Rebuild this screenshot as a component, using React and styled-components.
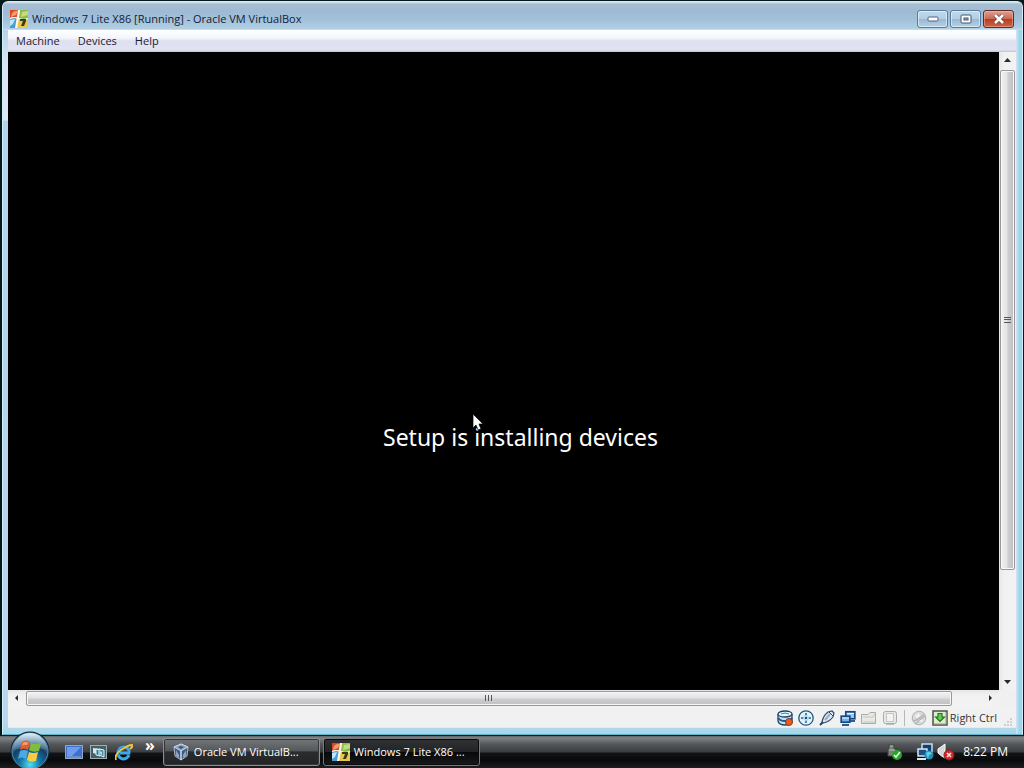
import React from 'react';
import styled, { createGlobalStyle, css } from 'styled-components';

const GlobalStyle = createGlobalStyle`
  * { box-sizing: border-box; }
  body { margin: 0; background: #04191a; font-family: "Open Sans", "Noto Sans", sans-serif; }
  button { font: inherit; margin: 0; padding: 0; border: 0; background: none; color: inherit; }
  svg { display: block; flex: none; }
`;

const Desktop = styled.div`
  height: 100vh;
  display: flex;
  flex-direction: column;
  overflow: hidden;
`;

const Window = styled.main`
  flex: 1;
  min-height: 0;
  margin: 1px 1px 0 2px;
  padding: 0 6px 6px 5px;
  display: flex;
  flex-direction: column;
  border: 1px solid #d4ecf8;
  border-bottom-color: #5fb4ca;
  border-radius: 6px 6px 0 0;
  background:
    linear-gradient(90deg, #d6e2f6, #a4d6ea 50%, #8fd7e9) right 28px / 6px 100% no-repeat,
    linear-gradient(#b7d2e6 0 28px, #d7e4f4 60px, #dce9f7 118px, #b0d4ee 119px, #b7d8f0 720px, #a5d7e8);
`;

const TitleBar = styled.header`
  flex: none;
  height: 28px;
  margin: 0 -6px 0 -5px;
  padding: 5px 8px 0 7px;
  display: flex;
  align-items: center;
  gap: 4px;
  border-radius: 5px 5px 0 0;
  background: linear-gradient(#dceaf4 0, #a6bed2 2px, #9fbad2 9px, #a2c2da 18px, #b1d0e5 27px, #dbe9f5);
`;

const Title = styled.h1`
  flex: 1;
  margin: 0;
  font-size: 11px;
  line-height: 16px;
  font-weight: 400;
  color: #142039;
  white-space: nowrap;
`;

const Controls = styled.div`
  display: flex;
  gap: 2px;
`;

const ControlButton = styled.button`
  width: 31px;
  height: 18px;
  display: grid;
  place-items: center;
  border: 1px solid #597b9e;
  border-radius: 3px;
  box-shadow: inset 0 0 0 1px rgba(255, 255, 255, 0.5);
  background: linear-gradient(#c2d8e9, #b4cee3 48%, #98b8d3 50%, #b3d2e8);
  ${({ $danger }) => $danger && css`
    border-color: #622824;
    box-shadow: inset 0 0 0 1px rgba(255, 200, 180, 0.45);
    background: linear-gradient(#dda092, #cb6a55 48%, #b73b22 50%, #cd6447);
  `}
`;

const MenuBar = styled.nav`
  flex: none;
  height: 22px;
  padding: 0 8px;
  display: flex;
  gap: 18px;
  background: linear-gradient(#ffffff, #f4f6fc 36%, #dfe0f0 50%, #e2e3f2 90%, #c1c2cf);
`;

const MenuItem = styled.button`
  font-size: 11px;
  line-height: 20px;
  color: #1c1b33;
`;

const Viewport = styled.div`
  flex: 1;
  min-height: 0;
  display: grid;
  grid-template: minmax(0, 1fr) 17px / minmax(0, 1fr) 17px;
  background: #f0f0f1;
`;

const GuestScreen = styled.section`
  display: grid;
  place-items: center;
  padding: 132px 0 0 34px;
  background: #000;
`;

const SetupMessage = styled.p`
  position: relative;
  margin: 0;
  font-family: "Noto Sans", sans-serif;
  font-size: 23px;
  line-height: 32px;
  color: #fff;
  white-space: nowrap;
`;

const Cursor = styled.svg`
  position: absolute;
  left: 89px;
  top: -8px;
`;

const ScrollBar = styled.div`
  display: flex;
  flex-direction: ${({ $vertical }) => ($vertical ? 'column' : 'row')};
  background: ${({ $vertical }) => ($vertical
    ? 'linear-gradient(90deg, #e6e6e8, #f1f1f2 30%, #f2f2f2)'
    : 'linear-gradient(#e6e6e8, #f1f1f2 30%, #f2f2f2)')};
`;

const ScrollArrow = styled.button`
  flex: none;
  width: 17px;
  height: 17px;
  display: grid;
  place-items: center;
`;

const Track = styled.div`
  flex: 1;
  min-height: 0;
  min-width: 0;
  display: flex;
  padding: 1px;
  flex-direction: ${({ $vertical }) => ($vertical ? 'column' : 'row')};
`;

const Thumb = styled.div`
  display: grid;
  place-items: center;
  border: 1px solid #98989c;
  border-radius: 2px;
  box-shadow: inset 0 0 0 1px #f7f7f7;
  flex: 0 0 ${({ $size }) => $size};
  background: linear-gradient(${({ $vertical }) => ($vertical ? '90deg' : '180deg')}, #f2f2f2, #e1e1e2 48%, #cfcfd1 52%, #c0c0c4);
`;

const StatusBar = styled.footer`
  flex: none;
  height: 21px;
  padding: 2px 4px 0 8px;
  display: flex;
  align-items: center;
  justify-content: flex-end;
  gap: 5px;
  background: #f1f1f1;
  border-bottom: 1px solid #e6e9fa;
`;

const StatusDivider = styled.span`
  width: 1px;
  height: 16px;
  margin: 0 1px;
  background: #b8b8b8;
`;

const HostKey = styled.span`
  margin-left: -3px;
  font-size: 11px;
  line-height: 16px;
  color: #37373b;
`;

const ResizeGrip = styled.svg`
  align-self: flex-end;
`;

const Taskbar = styled.nav`
  position: relative;
  flex: none;
  height: 33px;
  padding: 2px 16px 2px 10px;
  display: flex;
  align-items: center;
  border-top: 1px solid #071d25;
  background: linear-gradient(#5c6266 0, #808487 2px, #55585b 8px, #3b3d40 16px, #121416 17px, #08090a 24px, #1c1e20);
  color: #fff;
`;

const StartButton = styled.button`
  flex: none;
  width: 40px;
  height: 28px;
  position: relative;
`;

const Orb = styled.svg`
  position: absolute;
  left: 0;
  bottom: -5px;
`;

const QuickLaunch = styled.div`
  display: flex;
  align-items: center;
  gap: 7px;
  margin: 0 8px 0 15px;
`;

const Chevron = styled.button`
  align-self: flex-start;
  margin: -6px 0 0 5px;
  font-size: 16px;
  line-height: 16px;
  font-weight: 700;
`;

const QuickButton = styled.button`
  width: 18px;
  height: 18px;
`;

const Tasks = styled.div`
  flex: 1;
  display: flex;
  gap: 3px;
`;

const TaskButton = styled.button`
  width: 157px;
  height: 28px;
  padding: 0 8px;
  display: flex;
  align-items: center;
  gap: 4px;
  border: 1px solid #8b8d8f;
  border-radius: 3px;
  box-shadow: inset 0 0 0 1px #33363a;
  text-align: left;
  background: linear-gradient(#75787b, #55585b 45%, #2a2c2e 50%, #222426);
  ${({ $active }) => $active && css`
    border-color: #77797b;
    box-shadow: inset 0 0 0 1px #0a0b0c;
    background: linear-gradient(#303234, #222426 48%, #08090a 52%, #18191b);
  `}
`;

const TaskLabel = styled.span`
  flex: 1;
  min-width: 0;
  white-space: nowrap;
  font-size: 11px;
  line-height: 16px;
`;

const Tray = styled.div`
  display: flex;
  align-items: center;
  gap: 3px;
`;

const TrayGap = styled.span`
  width: 7px;
`;

const Clock = styled.time`
  margin-left: 5px;
  font-size: 12px;
  line-height: 16px;
  white-space: nowrap;
`;

const SevenIcon = () => (
  <svg width="18" height="18" viewBox="0 0 18 18" aria-hidden="true">
    <rect width="18" height="18" fill="#f1eee0" />
    <path d="M0 0H9L8 8Q4 6 0 8Z" fill="#d64a22" />
    <path d="M2 3Q5 0 8 1L6 5 1 7Z" fill="#f29a6a" />
    <path d="M10 0H18V8Q13 10 9 8Z" fill="#8fbd4d" />
    <path d="M12 2 18 1V5L11 7Z" fill="#c5dc7e" />
    <path d="M0 9Q4 7 8 9L6 18H0Z" fill="#4d9bd4" />
    <path d="M0 10 5 9 3 14 0 16Z" fill="#c4e4f6" />
    <path d="M9 9Q14 11 18 9V18H7Z" fill="#e7c74d" />
    <path d="M8 0H10L7 18H5ZM0 8Q4 6 9 8T18 8V9Q13 11 9 9T0 9Z" fill="#fff8e6" />
    <path d="M10 9H16V11L14 16H11L13 11H10Z" fill="#3a3c12" />
  </svg>
);

const VirtualBoxIcon = () => (
  <svg width="18" height="18" viewBox="0 0 18 18" aria-hidden="true">
    <path d="M9 1 16 4 15 13 9 17 3 13 2 4Z" fill="#3f587c" stroke="#a9bad0" />
    <path d="M9 1 16 4 9 8 2 4Z" fill="#8ba3c1" stroke="#c6d3e3" />
    <path d="M9 8V17" stroke="#d0dbe8" strokeWidth="1.5" />
    <path d="M4 7 7 12V15L4 13ZM14 7 11 12V15L14 13Z" fill="#8ca5c5" />
    <path d="M6 4 9 3 12 4 9 6Z" fill="#385477" />
  </svg>
);

const WindowsOrb = () => (
  <Orb width="40" height="40" viewBox="0 0 40 40" aria-hidden="true">
    <defs>
      <radialGradient id="orb" cx="50%" cy="88%" r="82%">
        <stop offset="0" stopColor="#4de1fa" />
        <stop offset="0.34" stopColor="#1477a6" />
        <stop offset="0.65" stopColor="#153e66" />
        <stop offset="1" stopColor="#8caec1" />
      </radialGradient>
      <linearGradient id="gloss" x2="0" y2="1">
        <stop stopColor="#e3f2f8" stopOpacity="0.95" />
        <stop offset="1" stopColor="#6c9abb" stopOpacity="0.3" />
      </linearGradient>
    </defs>
    <circle cx="20" cy="20" r="19.5" fill="#0b2430" />
    <circle cx="20" cy="20" r="18" fill="url(#orb)" stroke="#5c90a8" />
    <path d="M3 19A17 17 0 0 1 37 19Q20 14 3 19Z" fill="url(#gloss)" />
    <path d="M12 11Q16 8 20 11L18 19Q14 16 10 19Z" fill="#e65f2b" />
    <path d="M21 12Q25 14 31 12L29 20Q23 22 19 19Z" fill="#80bd3f" />
    <path d="M10 20Q14 18 18 20L16 28Q12 25 8 28Z" fill="#4fa8e3" />
    <path d="M19 21Q23 23 28 21L26 30Q21 32 17 29Z" fill="#f9cb3f" />
    <path d="M13 12Q16 10 18 12L17 14Q14 13 12 15Z" fill="#f3a078" />
  </Orb>
);

const DesktopIcon = () => (
  <svg width="18" height="18" viewBox="0 0 18 18" aria-hidden="true">
    <rect x="0.5" y="2.5" width="17" height="13" fill="#3f70d0" stroke="#90a6c4" />
    <path d="M2 4H16L7 13H2Z" fill="#6c9bf0" />
    <path d="M2 13H16V15H2Z" fill="#6d8fc6" />
  </svg>
);

const SwitcherIcon = () => (
  <svg width="18" height="18" viewBox="0 0 18 18" aria-hidden="true">
    <rect x="0.5" y="2.5" width="16" height="13" fill="#4a5c64" stroke="#9dabb2" />
    <path d="M3 5 11 6V12L3 10Z" fill="#d7e5ea" />
    <path d="M6 6 10 7V13L6 12Z" fill="#2a7d92" stroke="#e0eef2" />
    <path d="M9 6 14 7V14L9 12Z" fill="#3990a6" stroke="#e8f4f6" />
    <path d="M10 8 12 9V12L10 11Z" fill="#a7e0e8" />
  </svg>
);

const ExplorerIcon = () => (
  <svg width="18" height="18" viewBox="0 0 18 18" aria-hidden="true">
    <path d="M14 12Q12 16 8 16 3 15 3 10 4 4 9 4 15 5 14 10H5" fill="none" stroke="#3ea9ea" strokeWidth="3" />
    <path d="M3 13Q2 5 10 4" fill="none" stroke="#1e78c9" strokeWidth="1" />
    <path d="M1 17Q-1 12 6 7T17 2Q18 4 15 6" fill="none" stroke="#efc43b" strokeWidth="2" />
  </svg>
);

const HardDiskIcon = () => (
  <svg width="16" height="16" viewBox="0 0 16 16" aria-hidden="true">
    <path d="M1 4V11Q2 15 8 15T15 11V4" fill="#c5e2f2" stroke="#1e4566" strokeWidth="1.3" />
    <ellipse cx="8" cy="4" rx="7" ry="3" fill="#eaf7ff" stroke="#1b456a" strokeWidth="1.3" />
    <path d="M1 8Q3 11 8 11T15 8" fill="none" stroke="#1f5b88" strokeWidth="2" />
    <path d="M4 4Q8 2 12 4" fill="none" stroke="#4181ac" />
    <circle cx="12" cy="12" r="3.5" fill="#ed5b1c" stroke="#7c3d26" />
  </svg>
);

const DiscIcon = () => (
  <svg width="16" height="16" viewBox="0 0 16 16" aria-hidden="true">
    <circle cx="8" cy="8" r="7.2" fill="#e2f2fa" stroke="#23577d" strokeWidth="1.3" />
    <path d="M8 3V5M8 11V13M3 8H5M11 8H13" stroke="#4789b5" strokeWidth="2" />
    <circle cx="8" cy="8" r="2.5" fill="#f6fbff" stroke="#a5c6db" />
    <circle cx="8" cy="8" r="1.3" fill="#194768" />
  </svg>
);

const UsbIcon = () => (
  <svg width="16" height="16" viewBox="0 0 16 16" aria-hidden="true">
    <path d="M3 12Q4 6 9 2L13 1 15 3 14 7Q10 12 4 13Z" fill="#dce8f4" stroke="#364c6a" strokeWidth="1.2" />
    <path d="M6 10 11 4" stroke="#93aed0" strokeWidth="2" />
    <path d="M10 2 14 6" stroke="#35506d" />
    <path d="M1 15 4 12" stroke="#214661" strokeWidth="2" />
  </svg>
);

const NetworkIcon = () => (
  <svg width="16" height="16" viewBox="0 0 16 16" aria-hidden="true">
    <rect x="5.8" y="1.8" width="9" height="7" fill="#9dc9f0" stroke="#164984" strokeWidth="1.7" />
    <path d="M10 11H15" stroke="#144478" strokeWidth="1.7" />
    <rect x="1.2" y="6.2" width="8.6" height="6" fill="#78b2e6" stroke="#164984" strokeWidth="1.7" />
    <path d="M2 15H9" stroke="#123f76" strokeWidth="1.7" />
    <path d="M7 3.5H14M2 8H9" stroke="#e6f6ff" />
  </svg>
);

const FolderIcon = () => (
  <svg width="16" height="16" viewBox="0 0 16 16" aria-hidden="true">
    <path d="M0.5 13.5V4.5H7L9 2.5H14.5V13.5Z" fill="#e9e9e4" stroke="#aaa" />
    <path d="M2 7H12L14 4M2 12H14" fill="none" stroke="#c5c5c5" />
  </svg>
);

const DisplayIcon = () => (
  <svg width="16" height="16" viewBox="0 0 16 16" aria-hidden="true">
    <rect x="1.5" y="1.5" width="13" height="12" rx="2" fill="#e8e8e5" stroke="#aaa" />
    <path d="M4 14.5H12" stroke="#bebebe" />
    <rect x="4.5" y="3.5" width="7" height="8" fill="#f4f4f2" stroke="#c6c6c4" />
  </svg>
);

const MouseIcon = () => (
  <svg width="16" height="16" viewBox="0 0 16 16" aria-hidden="true">
    <circle cx="8" cy="8" r="6.8" fill="#dadada" stroke="#b2b2b2" />
    <path d="M2 11Q8 10 13 4M4 14 14 6" fill="none" stroke="#b4b4b4" strokeWidth="1.3" />
    <path d="M4 6 8 3 9 6 6 8ZM8 11 12 9 11 12Z" fill="#f4f4f4" />
  </svg>
);

const HostKeyIcon = () => (
  <svg width="16" height="16" viewBox="0 0 16 16" aria-hidden="true">
    <rect x="1" y="1" width="14" height="14" fill="#e3ead2" stroke="#4a5342" strokeWidth="1.5" />
    <path d="M2 14H14V2" fill="none" stroke="#98a08c" />
    <path d="M6 3.5H10V7H12.5L8 11.5 3.5 7H6Z" fill="#5fd24b" stroke="#237421" strokeWidth="1.2" />
  </svg>
);

const SafeRemovalIcon = () => (
  <svg width="18" height="18" viewBox="0 0 18 18" aria-hidden="true">
    <path d="M4 2H9V6H11V13H3V6H4Z" fill="#7a817c" stroke="#414843" />
    <path d="M5 3H8M4 7H10" stroke="#b6bbb7" />
    <circle cx="12" cy="12" r="5" fill="#28a529" />
    <path d="M9 12 11 14 15 9" fill="none" stroke="#e8ffe4" strokeWidth="1.6" />
  </svg>
);

const TrayNetworkIcon = () => (
  <svg width="18" height="18" viewBox="0 0 18 18" aria-hidden="true">
    <rect x="6" y="1" width="10" height="8" fill="#113f78" stroke="#d5e9f4" strokeWidth="1.4" />
    <rect x="2" y="6" width="9" height="7" fill="#1b5286" stroke="#e2f3fb" strokeWidth="1.4" />
    <path d="M1 16H10" stroke="#dcebf1" strokeWidth="2" />
    <circle cx="13" cy="12" r="4.5" fill="#208dbc" />
    <path d="M10 10Q14 7 16 11L13 12 12 16Z" fill="#65d0d8" />
  </svg>
);

const SpeakerIcon = () => (
  <svg width="18" height="18" viewBox="0 0 18 18" aria-hidden="true">
    <path d="M1 6Q4 4 8 1V15Q4 13 1 10Z" fill="#d4d6da" stroke="#fafafa" />
    <circle cx="12" cy="12" r="5" fill="#cf2b2e" stroke="#921819" />
    <path d="M10 10 14 14M14 10 10 14" stroke="#ffe1df" strokeWidth="1.5" />
  </svg>
);

const Arrow = ({ path }) => (
  <svg width="7" height="7" viewBox="0 0 7 7" aria-hidden="true"><path d={path} fill="#292929" /></svg>
);

const arrows = {
  up: 'M0 5 3.5 1 7 5Z',
  down: 'M0 2 3.5 6 7 2Z',
  left: 'M5 0 2 3 5 6Z',
  right: 'M2 0 5 3 2 6Z',
};

const Grip = ({ vertical }) => (
  <svg width="8" height="8" viewBox="0 0 8 8" aria-hidden="true">
    <path d={vertical ? 'M0 1.5H7M0 3.5H7M0 6.5H7' : 'M0.5 0V6M3.5 0V6M6.5 0V6'} stroke="#57575b" />
  </svg>
);

const statusIcons = [HardDiskIcon, DiscIcon, UsbIcon, NetworkIcon, FolderIcon, DisplayIcon];

export default function App() {
  return (
    <Desktop>
      <GlobalStyle />
      <Window>
        <TitleBar>
          <SevenIcon />
          <Title>Windows 7 Lite X86 [Running] - Oracle VM VirtualBox</Title>
          <Controls>
            <ControlButton aria-label="Minimize">
              <svg width="12" height="6" viewBox="0 0 12 6"><rect x="1" y="1" width="10" height="4" rx="1" fill="#f8fbff" stroke="#556578" /></svg>
            </ControlButton>
            <ControlButton aria-label="Maximize">
              <svg width="12" height="10" viewBox="0 0 12 10">
                <rect x="1" y="1" width="10" height="8" rx="1" fill="#f8fbff" stroke="#46566b" />
                <rect x="4" y="4" width="4" height="2" fill="#9dbad2" stroke="#46566b" />
              </svg>
            </ControlButton>
            <ControlButton $danger aria-label="Close">
              <svg width="12" height="10" viewBox="0 0 12 10">
                <path d="M2 1 10 9M10 1 2 9" stroke="#643c42" strokeWidth="4" />
                <path d="M2 1 10 9M10 1 2 9" stroke="#fff" strokeWidth="2.6" />
              </svg>
            </ControlButton>
          </Controls>
        </TitleBar>

        <MenuBar aria-label="Virtual machine">
          <MenuItem>Machine</MenuItem>
          <MenuItem>Devices</MenuItem>
          <MenuItem>Help</MenuItem>
        </MenuBar>

        <Viewport>
          <GuestScreen>
            <SetupMessage>
              Setup is installing devices
              <Cursor width="12" height="19" viewBox="0 0 12 19" aria-hidden="true">
                <path d="M1 1V15L4 12 6 17 9 16 7 11H11Z" fill="#fff" stroke="#000" strokeWidth="0.7" />
              </Cursor>
            </SetupMessage>
          </GuestScreen>
          <ScrollBar $vertical>
            <ScrollArrow aria-label="Scroll up"><Arrow path={arrows.up} /></ScrollArrow>
            <Track $vertical><Thumb $vertical $size="83%"><Grip vertical /></Thumb></Track>
            <ScrollArrow aria-label="Scroll down"><Arrow path={arrows.down} /></ScrollArrow>
          </ScrollBar>
          <ScrollBar>
            <ScrollArrow aria-label="Scroll left"><Arrow path={arrows.left} /></ScrollArrow>
            <Track><Thumb $size="97%"><Grip /></Thumb></Track>
            <ScrollArrow aria-label="Scroll right"><Arrow path={arrows.right} /></ScrollArrow>
          </ScrollBar>
        </Viewport>

        <StatusBar>
          {statusIcons.map((Icon, index) => <Icon key={index} />)}
          <StatusDivider />
          <MouseIcon />
          <HostKeyIcon />
          <HostKey>Right Ctrl</HostKey>
          <ResizeGrip width="10" height="10" viewBox="0 0 10 10" aria-hidden="true">
            <path d="M8 1H10V3H8ZM8 4H10V6H8ZM5 4H7V6H5ZM8 7H10V9H8ZM5 7H7V9H5ZM2 7H4V9H2Z" fill="#cfcfd2" />
          </ResizeGrip>
        </StatusBar>
      </Window>

      <Taskbar aria-label="Taskbar">
        <StartButton aria-label="Start"><WindowsOrb /></StartButton>
        <QuickLaunch>
          <QuickButton aria-label="Show desktop"><DesktopIcon /></QuickButton>
          <QuickButton aria-label="Switch between windows"><SwitcherIcon /></QuickButton>
          <QuickButton aria-label="Internet Explorer"><ExplorerIcon /></QuickButton>
          <Chevron aria-label="More quick launch items">»</Chevron>
        </QuickLaunch>
        <Tasks>
          <TaskButton><VirtualBoxIcon /><TaskLabel>Oracle VM VirtualB...</TaskLabel></TaskButton>
          <TaskButton $active><SevenIcon /><TaskLabel>Windows 7 Lite X86 ...</TaskLabel></TaskButton>
        </Tasks>
        <Tray>
          <SafeRemovalIcon />
          <TrayGap />
          <TrayNetworkIcon />
          <SpeakerIcon />
          <Clock>8:22 PM</Clock>
        </Tray>
      </Taskbar>
    </Desktop>
  );
}
